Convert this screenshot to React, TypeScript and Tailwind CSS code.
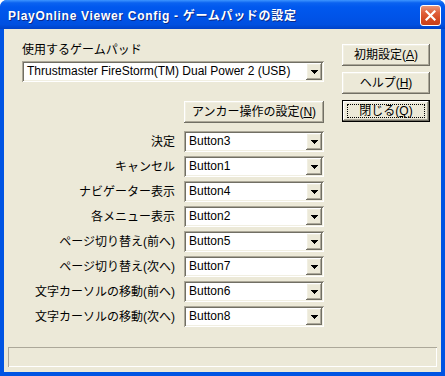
import React from "react";

const sunken =
  "shadow-[inset_1px_1px_0_#ACA899,inset_-1px_-1px_0_#FFFFFF,inset_2px_2px_0_#716F64,inset_-2px_-2px_0_#F1EFE2]";
const raised =
  "shadow-[inset_-1px_-1px_0_#716F64,inset_1px_1px_0_#FFFFFF,inset_-2px_-2px_0_#ACA899,inset_2px_2px_0_#F1EFE2]";

const Arrow = () => (
  <svg width="7" height="4" viewBox="0 0 7 4" shapeRendering="crispEdges">
    <rect x="0" y="0" width="7" height="1" fill="#000" />
    <rect x="1" y="1" width="5" height="1" fill="#000" />
    <rect x="2" y="2" width="3" height="1" fill="#000" />
    <rect x="3" y="3" width="1" height="1" fill="#000" />
  </svg>
);

const Combo = ({ value, className = "" }: { value: string; className?: string }) => (
  <div className={`flex h-[21px] items-stretch bg-white p-[2px] ${sunken} ${className}`}>
    <div className="flex-1 truncate pl-[3px] text-[12px] leading-[17px] text-black">{value}</div>
    <div className={`flex w-[16px] items-center justify-center bg-[#ECE9D8] ${raised}`}>
      <Arrow />
    </div>
  </div>
);

const Btn = ({
  children,
  className = "",
  isDefault = false,
}: {
  children: React.ReactNode;
  className?: string;
  isDefault?: boolean;
}) =>
  isDefault ? (
    <div className={`h-[22px] border border-black bg-[#ECE9D8] ${className}`}>
      <div className={`flex h-full items-center justify-center ${raised}`}>
        <div className="flex h-[14px] w-[calc(100%-8px)] items-center justify-center border border-dotted border-black text-[12px] leading-[12px]">
          {children}
        </div>
      </div>
    </div>
  ) : (
    <div
      className={`flex h-[22px] items-center justify-center bg-[#ECE9D8] text-[12px] leading-[14px] ${raised} ${className}`}
    >
      {children}
    </div>
  );

const rows: [string, string][] = [
  ["決定", "Button3"],
  ["キャンセル", "Button1"],
  ["ナビゲーター表示", "Button4"],
  ["各メニュー表示", "Button2"],
  ["ページ切り替え(前へ)", "Button5"],
  ["ページ切り替え(次へ)", "Button7"],
  ["文字カーソルの移動(前へ)", "Button6"],
  ["文字カーソルの移動(次へ)", "Button8"],
];

export default function App() {
  return (
    <div className="h-[376px] w-[445px] bg-white font-['Liberation_Sans','Noto_Sans_CJK_JP',sans-serif] text-black">
      <div className="flex h-full flex-col overflow-hidden rounded-t-[7px] bg-[#0054E3]">
        {/* title bar */}
        <div className="flex h-[29px] shrink-0 items-center justify-between bg-[linear-gradient(180deg,#3D95FF_0%,#0A62F0_10%,#0058EE_25%,#0053E8_60%,#0050E0_85%,#0042C8_100%)] pl-[8px] pr-[4px]">
          <span className="pt-[2px] text-[12px] font-bold leading-[16px] tracking-[0.7px] text-white [text-shadow:1px_1px_0_#0A2A8A]">
            PlayOnline Viewer Config - ゲームパッドの設定
          </span>
          <div className="mt-[1px] flex h-[21px] w-[21px] items-center justify-center rounded-[3px] border border-white bg-[linear-gradient(180deg,#E9967A_0%,#E0613C_35%,#D44A22_70%,#C8401A_100%)]">
            <svg width="11" height="11" viewBox="0 0 11 11">
              <path d="M1.5 1.5l8 8M9.5 1.5l-8 8" stroke="#fff" strokeWidth="2.2" strokeLinecap="square" />
            </svg>
          </div>
        </div>

        {/* body */}
        <div className="mx-[4px] mb-[4px] flex flex-1 flex-col bg-[#ECE9D8]">
          <div className="flex flex-1 pl-[18px] pt-[13px]">
            <div className="flex w-[302px] flex-col">
              <div className="text-[12px] leading-[16px]">使用するゲームパッド</div>
              <Combo value="Thrustmaster FireStorm(TM) Dual Power 2 (USB)" className="mt-[3px] w-[302px]" />
              <Btn className="mt-[19px] w-[140px] self-end">
                アンカー操作の設定(<u>N</u>)
              </Btn>
              <div className="mt-[8px] flex flex-col gap-[4px]">
                {rows.map(([label, value]) => (
                  <div key={label} className="flex items-center justify-end">
                    <span className="mr-[9px] text-[12px] leading-[16px]">{label}</span>
                    <Combo value={value} className="w-[140px]" />
                  </div>
                ))}
              </div>
            </div>
            <div className="ml-[18px] flex w-[88px] flex-col gap-[6px] pt-[2px]">
              <Btn>
                初期設定(<u>A</u>)
              </Btn>
              <Btn>
                ヘルプ(<u>H</u>)
              </Btn>
              <Btn isDefault>
                閉じる(<u>Q</u>)
              </Btn>
            </div>
          </div>
          <div className="mx-[4px] mb-[5px] h-[20px] border-t border-l border-t-[#ACA899] border-l-[#ACA899] shadow-[inset_-1px_-1px_0_#FFFFFF]" />
        </div>
      </div>
    </div>
  );
}
